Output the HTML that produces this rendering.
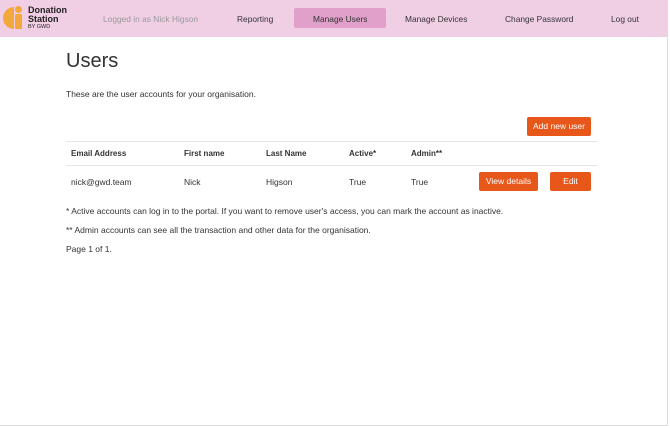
<!DOCTYPE html>
<html><head><meta charset="utf-8"><style>
*{margin:0;padding:0;box-sizing:border-box}
body{width:670px;height:428px;background:#fff;font-family:"Liberation Sans",sans-serif;color:#333;position:relative;overflow:hidden}
.frame{position:absolute;left:0;top:0;width:668px;height:426px;border-right:1px solid #ddd;border-bottom:1px solid #ddd}
.nav{position:absolute;left:0;top:0;width:668px;height:37px;background:#f0cfe5}
.nav span{position:absolute;top:14px;font-size:8.4px;color:#333}
.active{position:absolute;left:294px;top:8px;width:92px;height:20px;background:#e0a0c9;border-radius:2px}
.logo1{position:absolute;left:3px;top:7px;width:11px;height:22px;background:#f2a83a;border-radius:11px 0 0 11px}
.logo2{position:absolute;left:15px;top:14px;width:7px;height:15px;background:#f2a83a;border-radius:1px}
.logo3{position:absolute;left:15px;top:6px;width:7px;height:7px;background:#f2a83a;border-radius:50%}
.brand{position:absolute;left:28px;top:6px;font-size:9px;font-weight:bold;line-height:9px;color:#222}
.brand small{font-size:5.5px;font-weight:normal;display:block;line-height:7px}
h1{position:absolute;left:66px;top:50px;font-size:20px;font-weight:normal;color:#333}
.t{position:absolute;font-size:8.5px;color:#333}
.btn{position:absolute;background:#e8571a;color:#fff;font-size:8.5px;text-align:center;border-radius:2px;line-height:19px;height:19px}
.line{position:absolute;left:66px;width:531px;height:1px;background:#e6e6e6}
.h{font-weight:bold;color:#333;font-size:8px}
</style></head><body>
<div class="nav">
<div class="logo1"></div><div class="logo3"></div><div class="logo2"></div>
<div class="brand">Donation<br>Station<small>BY GWD</small></div>
<span style="left:103px;color:#999">Logged in as Nick Higson</span>
<span style="left:237px">Reporting</span>
<div class="active"></div>
<span style="left:313px">Manage Users</span>
<span style="left:405px">Manage Devices</span>
<span style="left:505px">Change Password</span>
<span style="left:611px">Log out</span>
</div>
<h1>Users</h1>
<div class="t" style="left:66px;top:89px">These are the user accounts for your organisation.</div>
<div class="btn" style="left:527px;top:117px;width:64px">Add new user</div>
<div class="line" style="top:141px"></div>
<div class="t h" style="left:71px;top:149px">Email Address</div>
<div class="t h" style="left:184px;top:149px">First name</div>
<div class="t h" style="left:266px;top:149px">Last Name</div>
<div class="t h" style="left:349px;top:149px">Active*</div>
<div class="t h" style="left:411px;top:149px">Admin**</div>
<div class="line" style="top:165px"></div>
<div class="t" style="left:71px;top:177px">nick@gwd.team</div>
<div class="t" style="left:184px;top:177px">Nick</div>
<div class="t" style="left:266px;top:177px">Higson</div>
<div class="t" style="left:349px;top:177px">True</div>
<div class="t" style="left:411px;top:177px">True</div>
<div class="btn" style="left:479px;top:172px;width:59px">View details</div>
<div class="btn" style="left:550px;top:172px;width:41px">Edit</div>
<div class="t" style="left:66px;top:206px">* Active accounts can log in to the portal. If you want to remove user's access, you can mark the account as inactive.</div>
<div class="t" style="left:66px;top:225px">** Admin accounts can see all the transaction and other data for the organisation.</div>
<div class="t" style="left:66px;top:244px">Page 1 of 1.</div>
<div class="frame"></div>
</body></html>
